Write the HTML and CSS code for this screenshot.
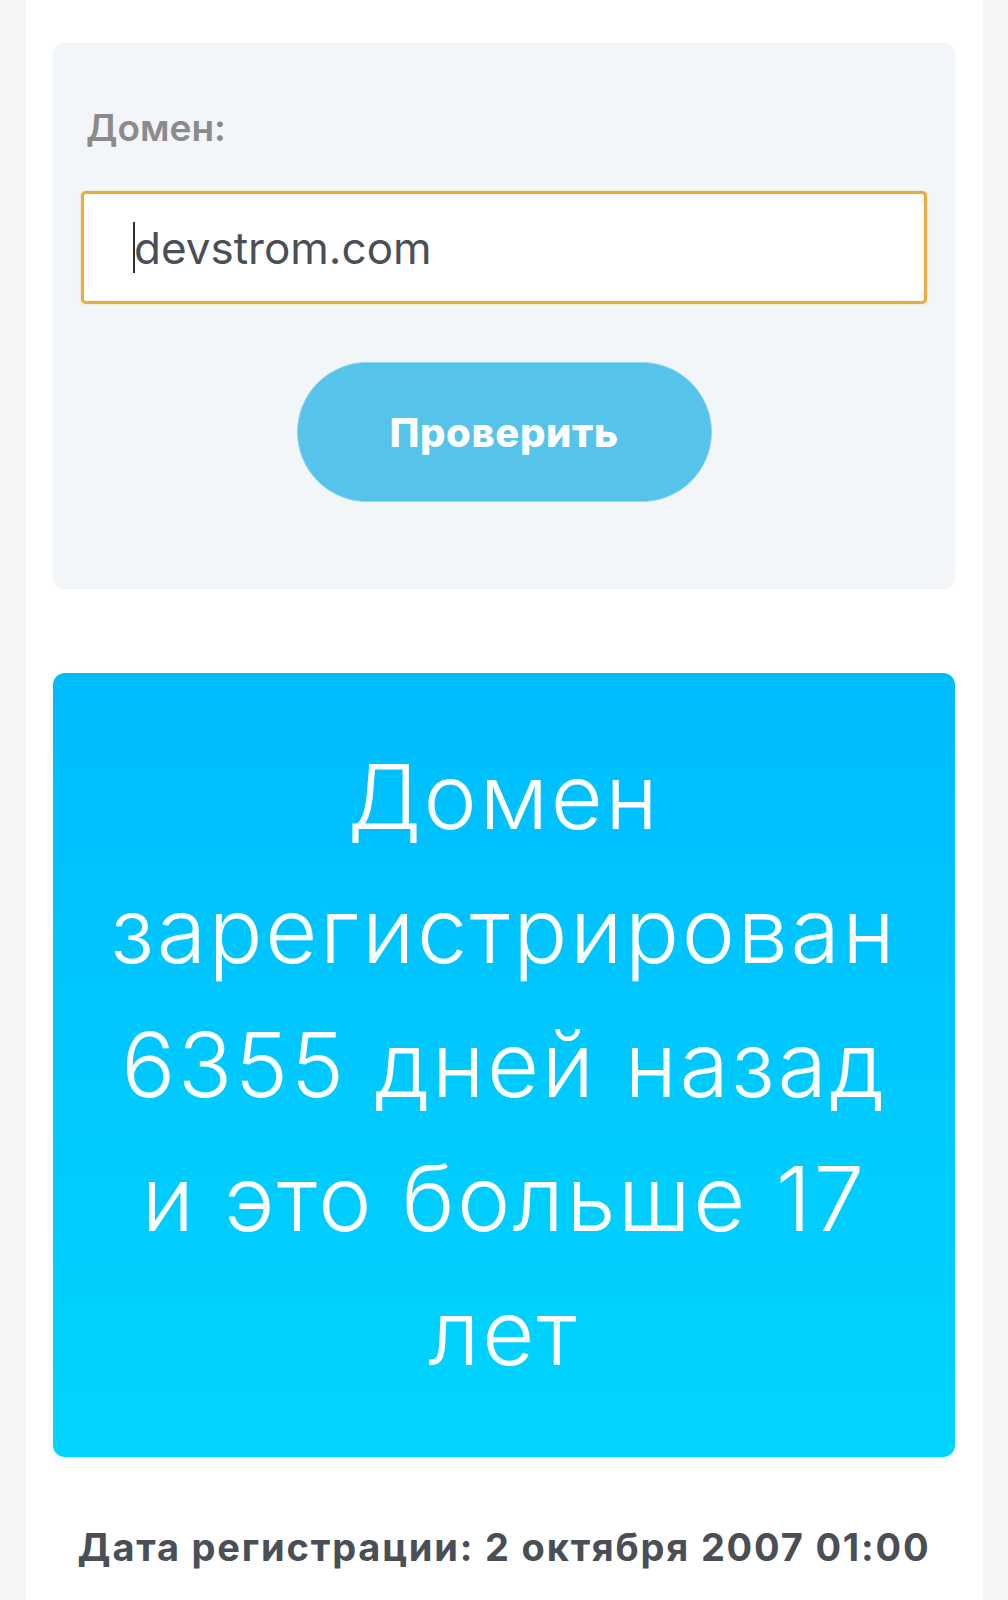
FILE: index.html
```html
<!DOCTYPE html>
<html lang="ru">
<head>
<meta charset="utf-8">
<title>Проверка домена</title>
<link rel="stylesheet" href="styles.css">
</head>
<body>
<div class="page">
  <form class="card">
    <label class="label">Домен:</label>
    <div class="input"><span class="caret"></span>devstrom.com</div>
    <div class="actions">
      <button type="button" class="btn">Проверить</button>
    </div>
  </form>
  <div class="result">Домен<br>зарегистрирован<br>6355 дней назад<br>и это больше 17<br>лет</div>
  <p class="date">Дата регистрации: 2 октября 2007 01:00</p>
</div>
</body>
</html>
```
FILE: styles.css
```css
html, body {
  margin: 0;
  padding: 0;
  background: #f4f5f7;
}
body {
  font-family: Inter, "Noto Sans", sans-serif;
}
.page {
  margin: 0 25px 0 26px;
  background: #ffffff;
  min-height: 1600px;
  padding: 43px 28px 0 27px;
  box-sizing: border-box;
}
.card {
  display: flex;
  flex-direction: column;
  background: #f3f6f8;
  border-radius: 12px;
  padding: 64px 28px 87px;
  margin: 0;
}
.label {
  font-size: 37px;
  line-height: 42px;
  font-weight: 600;
  color: #8b8b8b;
  padding-left: 5px;
}
.input {
  margin-top: 42px;
  height: 113px;
  box-sizing: border-box;
  border: 3px solid #e9ac3c;
  border-radius: 5px;
  background: #ffffff;
  display: flex;
  align-items: center;
  padding-left: 49px;
  font-size: 44px;
  color: #4a4f57;
  box-shadow: 0 0 2px rgba(233, 172, 60, 0.5);
}
.caret {
  width: 2px;
  height: 51px;
  background: #2b2f36;
  margin-right: -1px;
}
.actions {
  display: flex;
  justify-content: center;
  margin-top: 58px;
}
.btn {
  width: 415px;
  height: 140px;
  border-radius: 70px;
  border: 1px solid #8fd6f1;
  background: #55c3ea;
  color: #ffffff;
  font-family: Inter, "Noto Sans", sans-serif;
  font-size: 40px;
  font-weight: 800;
  letter-spacing: 0.6px;
  cursor: pointer;
}
.result {
  margin-top: 84px;
  background: linear-gradient(180deg, #00bcfd 0%, #00d5ff 100%);
  border-radius: 12px;
  padding: 57px;
  color: #ffffff;
  font-size: 90px;
  line-height: 134px;
  font-weight: 300;
  letter-spacing: 2.5px;
  text-align: center;
  box-shadow: 0 3px 6px rgba(0, 150, 200, 0.08);
}
.date {
  margin: 68px 0 0;
  text-align: center;
  font-size: 38px;
  line-height: 44px;
  font-weight: 700;
  letter-spacing: 1.8px;
  color: #4a4e55;
}
```
